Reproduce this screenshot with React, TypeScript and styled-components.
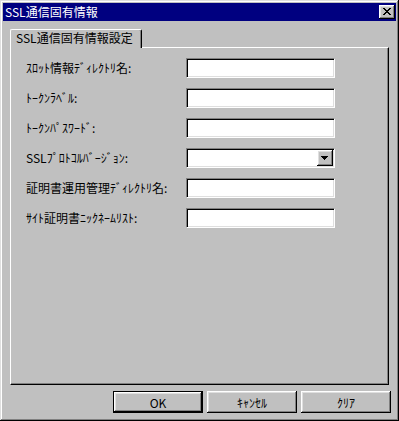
import React from 'react';
import styled, { createGlobalStyle } from 'styled-components';

const FONT = `"Noto Sans CJK JP", "Noto Sans", sans-serif`;

const Global = createGlobalStyle`
  html, body { margin: 0; padding: 0; background: #c0c0c0; }
  * { box-sizing: border-box; }
`;

const raised = `
  box-shadow: inset -1px -1px #000, inset 1px 1px #fff, inset -2px -2px #808080, inset 2px 2px #dfdfdf;
`;

const Window = styled.div`
  width: 399px;
  height: 421px;
  background: #c0c0c0;
  padding: 3px;
  display: flex;
  flex-direction: column;
  box-shadow: inset -1px -1px #000, inset 1px 1px #dfdfdf, inset -2px -2px #808080, inset 2px 2px #fff;
  font-family: ${FONT};
  font-size: 12px;
  color: #000;
`;

const TitleBar = styled.div`
  height: 18px;
  flex: none;
  background: #000080;
  display: flex;
  align-items: center;
  justify-content: space-between;
  padding: 0 1px 0 2px;
`;

const TitleText = styled.span`
  color: #fff;
  line-height: 18px;
  white-space: nowrap;
`;

const CloseButton = styled.div`
  width: 16px;
  height: 14px;
  background: #c0c0c0;
  ${raised}
  display: flex;
  align-items: center;
  justify-content: center;
  padding: 0 1px 1px 0;
`;

const Body = styled.div`
  flex: 1;
  display: flex;
  flex-direction: column;
  padding: 8px 5px 5px;
`;

const TabStrip = styled.div`
  display: flex;
  padding-left: 2px;
`;

const Tab = styled.div`
  position: relative;
  z-index: 1;
  width: 132px;
  height: 19px;
  margin-bottom: -1px;
  background: #c0c0c0;
  border-top: 1px solid #fff;
  border-left: 1px solid #fff;
  border-right: 1px solid #000;
  border-radius: 2px 2px 0 0;
  box-shadow: inset -1px 0 #808080;
  padding: 0 0 0 5px;
  line-height: 16px;
  white-space: nowrap;
`;

const Panel = styled.div`
  flex: 1;
  margin: 0 2px;
  border: 1px solid;
  border-color: #fff #000 #000 #fff;
  box-shadow: inset -1px -1px #808080;
  padding: 10px 0 0 15px;
`;

const Form = styled.div`
  display: grid;
  grid-template-columns: 160px 149px;
  grid-auto-rows: 20px;
  row-gap: 10px;
  align-items: center;
`;

const Label = styled.label`
  white-space: nowrap;
  line-height: 20px;
`;

const sunken = `
  height: 20px;
  background: #fff;
  border: 1px solid;
  border-color: #808080 #fff #fff #808080;
  box-shadow: inset 1px 1px #000, inset -1px -1px #dfdfdf;
`;

const TextBox = styled.input`
  ${sunken}
  width: 149px;
  margin: 0;
  padding: 0 3px;
  outline: none;
  font-family: ${FONT};
  font-size: 12px;
`;

const Combo = styled.div`
  ${sunken}
  width: 149px;
  display: flex;
  justify-content: flex-end;
  padding: 1px;
`;

const DropButton = styled.div`
  width: 16px;
  height: 16px;
  background: #c0c0c0;
  ${raised}
  display: flex;
  align-items: center;
  justify-content: center;
  padding-right: 1px;
`;

const ButtonRow = styled.div`
  display: flex;
  justify-content: flex-end;
  gap: 4px;
  margin-top: 6px;
`;

const Button = styled.button<{ $default?: boolean }>`
  width: 90px;
  height: 22px;
  margin: 0;
  padding: 0;
  background: #c0c0c0;
  font-family: ${FONT};
  font-size: 12px;
  color: #000;
  border: ${(p) => (p.$default ? '1px solid #000' : 'none')};
  ${raised}
  display: flex;
  align-items: center;
  justify-content: center;
`;

const CloseIcon = () => (
  <svg width="8" height="7" viewBox="0 0 8 7" shapeRendering="crispEdges">
    <path
      fill="#000"
      d="M0 0h2v1H0zM6 0h2v1H6zM1 1h2v1H1zM5 1h2v1H5zM2 2h4v1H2zM3 3h2v1H3zM2 4h4v1H2zM1 5h2v1H1zM5 5h2v1H5zM0 6h2v1H0zM6 6h2v1H6z"
    />
  </svg>
);

const ArrowIcon = () => (
  <svg width="7" height="4" viewBox="0 0 7 4" shapeRendering="crispEdges">
    <path fill="#000" d="M0 0h7v1H0zM1 1h5v1H1zM2 2h3v1H2zM3 3h1v1H3z" />
  </svg>
);

const fields: { label: string; combo?: boolean }[] = [
  { label: 'ｽﾛｯﾄ情報ﾃﾞｨﾚｸﾄﾘ名:' },
  { label: 'ﾄｰｸﾝﾗﾍﾞﾙ:' },
  { label: 'ﾄｰｸﾝﾊﾟｽﾜｰﾄﾞ:' },
  { label: 'SSLﾌﾟﾛﾄｺﾙﾊﾞｰｼﾞｮﾝ:', combo: true },
  { label: '証明書運用管理ﾃﾞｨﾚｸﾄﾘ名:' },
  { label: 'ｻｲﾄ証明書ﾆｯｸﾈｰﾑﾘｽﾄ:' },
];

export default function App() {
  return (
    <>
      <Global />
      <Window>
        <TitleBar>
          <TitleText>SSL通信固有情報</TitleText>
          <CloseButton>
            <CloseIcon />
          </CloseButton>
        </TitleBar>
        <Body>
          <TabStrip>
            <Tab>SSL通信固有情報設定</Tab>
          </TabStrip>
          <Panel>
            <Form>
              {fields.map((f) => (
                <React.Fragment key={f.label}>
                  <Label>{f.label}</Label>
                  {f.combo ? (
                    <Combo>
                      <DropButton>
                        <ArrowIcon />
                      </DropButton>
                    </Combo>
                  ) : (
                    <TextBox readOnly />
                  )}
                </React.Fragment>
              ))}
            </Form>
          </Panel>
          <ButtonRow>
            <Button $default>OK</Button>
            <Button>ｷｬﾝｾﾙ</Button>
            <Button>ｸﾘｱ</Button>
          </ButtonRow>
        </Body>
      </Window>
    </>
  );
}
